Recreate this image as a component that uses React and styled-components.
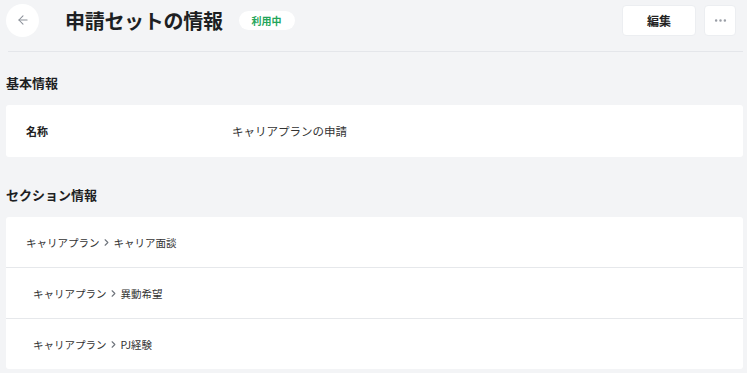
import React from 'react';
import styled, { createGlobalStyle } from 'styled-components';
import { ArrowLeft, ChevronRight, MoreHorizontal } from 'lucide-react';

//---------------------- DATA ------------------------

const sections = [
  { id: 1, parent: 'キャリアプラン', name: 'キャリア面談', indent: 20 },
  { id: 2, parent: 'キャリアプラン', name: '異動希望', indent: 27 },
  { id: 3, parent: 'キャリアプラン', name: 'PJ経験', indent: 27 },
];

//---------------------- APP -------------------------

const App = () => {
  return (
    <>
      <GlobalStyle />
      <Page>
        <Header>
          <BackButton aria-label="戻る">
            <ArrowLeft size={14} strokeWidth={1.8} />
          </BackButton>
          <Title>申請セットの情報</Title>
          <Badge>利用中</Badge>
          <Spacer />
          <EditButton>編集</EditButton>
          <MoreButton aria-label="その他">
            <MoreHorizontal size={15} strokeWidth={2} />
          </MoreButton>
        </Header>
        <Divider />

        <SectionTitle $top={21}>基本情報</SectionTitle>
        <Card>
          <InfoRow>
            <Label>名称</Label>
            <Value>キャリアプランの申請</Value>
          </InfoRow>
        </Card>

        <SectionTitle $top={28}>セクション情報</SectionTitle>
        <Card>
          {sections.map((s) => (
            <SectionRow key={s.id} $indent={s.indent}>
              {s.parent}
              <Chevron size={11} strokeWidth={2.4} />
              {s.name}
            </SectionRow>
          ))}
        </Card>
      </Page>
    </>
  );
};

//---------------------- STYLE ----------------------

const GlobalStyle = createGlobalStyle`
  body {
    margin: 0;
    background: #f3f4f6;
    font-family: "Noto Sans CJK JP", "Noto Sans", sans-serif;
    color: #222;
  }
`;

const Page = styled.div`
  padding: 0 4px 0 6px;
`;

const Header = styled.div`
  display: flex;
  align-items: center;
  height: 41px;
`;

const BackButton = styled.button`
  width: 33px;
  height: 33px;
  border-radius: 50%;
  border: none;
  background: #fff;
  color: #8a8f98;
  display: grid;
  place-items: center;
  padding: 0;
  margin-top: -1px;
`;

const Title = styled.h1`
  margin: 0 0 0 26px;
  font-size: 20px;
  font-weight: 700;
  color: #1d1f23;
  line-height: 1;
  letter-spacing: -0.3px;
`;

const Badge = styled.span`
  margin-left: 16px;
  height: 19px;
  padding: 0 13px;
  border-radius: 10px;
  background: #fff;
  color: #23a55a;
  font-size: 10px;
  font-weight: 700;
  display: inline-flex;
  align-items: center;
`;

const Spacer = styled.div`
  flex: 1;
`;

const EditButton = styled.button`
  width: 74px;
  height: 31px;
  border: 1px solid #eceef1;
  border-radius: 4px;
  background: #fff;
  font-family: inherit;
  font-size: 12px;
  font-weight: 700;
  color: #222;
`;

const MoreButton = styled.button`
  width: 32px;
  height: 31px;
  margin-left: 8px;
  margin-right: 7px;
  border: 1px solid #eceef1;
  border-radius: 4px;
  background: #fff;
  color: #9a9ea6;
  display: grid;
  place-items: center;
  padding: 0;
`;

const Divider = styled.hr`
  margin: 10px 0 0 2px;
  border: none;
  border-top: 1px solid #e4e6ea;
`;

const SectionTitle = styled.h2`
  margin: ${(p) => p.$top ?? 20}px 0 12px;
  font-size: 13px;
  font-weight: 700;
  line-height: 20px;
  color: #1d1f23;
`;

const Card = styled.div`
  background: #fff;
  border-radius: 3px;
`;

const InfoRow = styled.div`
  display: flex;
  align-items: center;
  height: 52px;
  padding-left: 20px;
`;

const Label = styled.div`
  width: 206px;
  font-size: 11px;
  font-weight: 700;
  color: #222;
`;

const Value = styled.div`
  font-size: 11.5px;
  color: #333;
`;

const SectionRow = styled.div`
  display: flex;
  align-items: center;
  height: 50px;
  padding-left: ${(p) => p.$indent}px;
  font-size: 10.5px;
  color: #333;
  & + & {
    border-top: 1px solid #e6e8eb;
  }
`;

const Chevron = styled(ChevronRight)`
  color: #6f747c;
  margin: 0 2px 0 1px;
`;

//------------------- EXPORTS --------------------
export default App;
